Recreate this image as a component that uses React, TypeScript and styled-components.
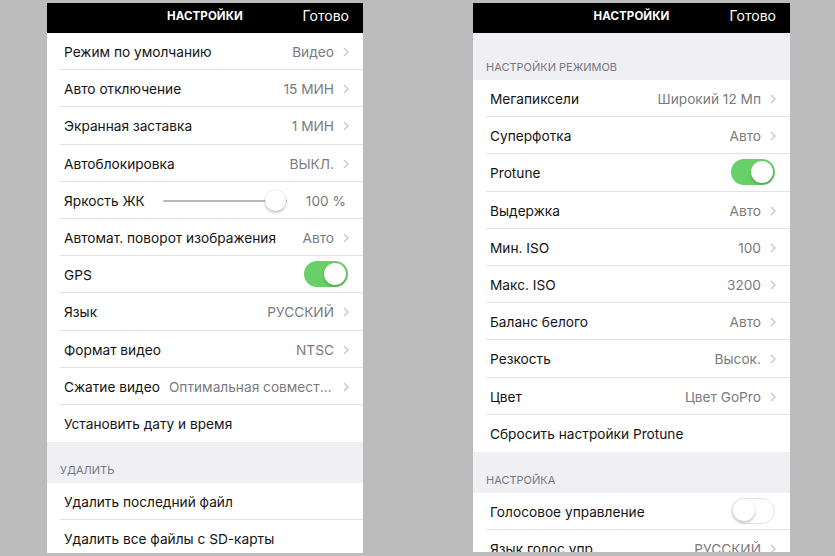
import React from "react";
import styled, { createGlobalStyle } from "styled-components";

const Global = createGlobalStyle`
  html, body { margin: 0; padding: 0; background: #bcbcbc; }
  body { font-family: Inter, "Noto Sans", Roboto, sans-serif; -webkit-font-smoothing: antialiased; }
`;

const Stage = styled.div`
  display: flex;
  gap: 110px;
  padding: 3px 0 0 47px;
  height: 553px;
  overflow: hidden;
  box-sizing: border-box;
`;

const Phone = styled.div<{ $w: number; $h: number }>`
  width: ${(p) => p.$w}px;
  height: ${(p) => p.$h}px;
  background: #ffffff;
  display: flex;
  flex-direction: column;
  overflow: hidden;
`;

const NavBar = styled.div`
  flex: 0 0 30px;
  box-sizing: border-box;
  padding-bottom: 5px;
  background: #000;
  display: grid;
  grid-template-columns: 1fr auto 1fr;
  align-items: center;
  color: #fff;
`;

const NavTitle = styled.div`
  font-size: 11.5px;
  font-weight: 700;
  letter-spacing: 0.1px;
`;

const NavDone = styled.div`
  justify-self: end;
  padding-right: 14px;
  font-size: 14px;
`;

const SectionHeader = styled.div<{ $h: number }>`
  height: ${(p) => p.$h}px;
  flex: 0 0 auto;
  background: #efeff4;
  display: flex;
  align-items: flex-end;
  padding: 0 0 6px 13px;
  box-sizing: border-box;
  font-size: 11px;
  color: #77777c;
  text-transform: uppercase;
`;

const Row = styled.div`
  flex: 0 0 37.2px;
  height: 37.2px;
  padding-left: 13px;
  box-sizing: border-box;
  background: #fff;
`;

const RowInner = styled.div<{ $last?: boolean }>`
  height: 100%;
  box-sizing: border-box;
  border-bottom: ${(p) => (p.$last ? "none" : "1px solid #e3e3e6")};
  display: flex;
  align-items: center;
  padding: 2px 14px 0 4px;
  gap: 9px;
`;

const Label = styled.div`
  font-size: 13.7px;
  color: #141414;
  white-space: nowrap;
  flex: 0 0 auto;
`;

const Value = styled.div`
  margin-left: auto;
  font-size: 13.7px;
  color: #7b7b7e;
  white-space: nowrap;
  overflow: hidden;
  text-overflow: ellipsis;
  min-width: 0;
`;

const PlainValue = styled(Value)`
  padding-right: 3px;
`;

const Chevron = () => (
  <svg width="6" height="10" viewBox="0 0 6 10" style={{ flex: "0 0 auto" }}>
    <polyline points="1,1 5,5 1,9" fill="none" stroke="#c7c7cc" strokeWidth="1.4" />
  </svg>
);

const SliderWrap = styled.div`
  position: relative;
  width: 124px;
  height: 22px;
  margin-left: 9px;
  display: flex;
  align-items: center;
`;

const Track = styled.div`
  height: 2px;
  width: 100%;
  background: #b7b7b7;
  border-radius: 1px;
`;

const Thumb = styled.div`
  position: absolute;
  right: 1px;
  top: 0;
  width: 21px;
  height: 21px;
  border-radius: 50%;
  background: #fff;
  box-shadow: 0 2px 3px rgba(0, 0, 0, 0.22), 0 0 0 0.5px rgba(0, 0, 0, 0.08);
`;

const Toggle = styled.div<{ $on: boolean }>`
  margin-left: auto;
  margin-right: 1px;
  margin-top: -2px;
  width: 44px;
  height: 26px;
  border-radius: 13px;
  box-sizing: border-box;
  position: relative;
  background: ${(p) => (p.$on ? "#69cf67" : "#fff")};
  border: ${(p) => (p.$on ? "none" : "1.5px solid #e4e4e6")};
`;

const Knob = styled.div<{ $on: boolean }>`
  position: absolute;
  top: ${(p) => (p.$on ? "2px" : "0.5px")};
  ${(p) => (p.$on ? "right: 2px;" : "left: 0.5px;")}
  width: 22px;
  height: 22px;
  border-radius: 50%;
  background: #fff;
  box-shadow: 0 2px 3px rgba(0, 0, 0, 0.2), 0 0 0 0.5px rgba(0, 0, 0, 0.06);
`;

type Item =
  | { kind: "nav"; label: string; value: string }
  | { kind: "plain"; label: string; value?: string }
  | { kind: "toggle"; label: string; on: boolean }
  | { kind: "slider"; label: string; value: string };

const renderRow = (it: Item, last: boolean, key: number) => (
  <Row key={key}>
    <RowInner $last={last}>
      <Label>{it.label}</Label>
      {it.kind === "nav" && (
        <>
          <Value>{it.value}</Value>
          <Chevron />
        </>
      )}
      {it.kind === "toggle" && (
        <Toggle $on={it.on}>
          <Knob $on={it.on} />
        </Toggle>
      )}
      {it.kind === "slider" && (
        <>
          <SliderWrap>
            <Track />
            <Thumb />
          </SliderWrap>
          <PlainValue>{it.value}</PlainValue>
        </>
      )}
    </RowInner>
  </Row>
);

const Group = ({ items, lastBorder }: { items: Item[]; lastBorder?: boolean }) => (
  <>{items.map((it, i) => renderRow(it, i === items.length - 1 && !lastBorder, i))}</>
);

const leftMain: Item[] = [
  { kind: "nav", label: "Режим по умолчанию", value: "Видео" },
  { kind: "nav", label: "Авто отключение", value: "15 МИН" },
  { kind: "nav", label: "Экранная заставка", value: "1 МИН" },
  { kind: "nav", label: "Автоблокировка", value: "ВЫКЛ." },
  { kind: "slider", label: "Яркость ЖК", value: "100 %" },
  { kind: "nav", label: "Автомат. поворот изображения", value: "Авто" },
  { kind: "toggle", label: "GPS", on: true },
  { kind: "nav", label: "Язык", value: "РУССКИЙ" },
  { kind: "nav", label: "Формат видео", value: "NTSC" },
  { kind: "nav", label: "Сжатие видео", value: "Оптимальная совместимость" },
  { kind: "plain", label: "Установить дату и время" },
];

const leftDelete: Item[] = [
  { kind: "plain", label: "Удалить последний файл" },
  { kind: "plain", label: "Удалить все файлы с SD-карты" },
];

const rightModes: Item[] = [
  { kind: "nav", label: "Мегапиксели", value: "Широкий 12 Мп" },
  { kind: "nav", label: "Суперфотка", value: "Авто" },
  { kind: "toggle", label: "Protune", on: true },
  { kind: "nav", label: "Выдержка", value: "Авто" },
  { kind: "nav", label: "Мин. ISO", value: "100" },
  { kind: "nav", label: "Макс. ISO", value: "3200" },
  { kind: "nav", label: "Баланс белого", value: "Авто" },
  { kind: "nav", label: "Резкость", value: "Высок." },
  { kind: "nav", label: "Цвет", value: "Цвет GoPro" },
  { kind: "plain", label: "Сбросить настройки Protune" },
];

const rightSetup: Item[] = [
  { kind: "toggle", label: "Голосовое управление", on: false },
  { kind: "nav", label: "Язык голос.упр.", value: "РУССКИЙ" },
];

const Nav = () => (
  <NavBar>
    <span />
    <NavTitle>НАСТРОЙКИ</NavTitle>
    <NavDone>Готово</NavDone>
  </NavBar>
);

export default function App() {
  return (
    <>
      <Global />
      <Stage>
        <Phone $w={316} $h={550}>
          <Nav />
          <Group items={leftMain} />
          <SectionHeader $h={41}>Удалить</SectionHeader>
          <Group items={leftDelete} lastBorder />
        </Phone>
        <Phone $w={317} $h={549}>
          <Nav />
          <SectionHeader $h={47}>Настройки режимов</SectionHeader>
          <Group items={rightModes} />
          <SectionHeader $h={41}>Настройка</SectionHeader>
          <Group items={rightSetup} lastBorder />
        </Phone>
      </Stage>
    </>
  );
}
